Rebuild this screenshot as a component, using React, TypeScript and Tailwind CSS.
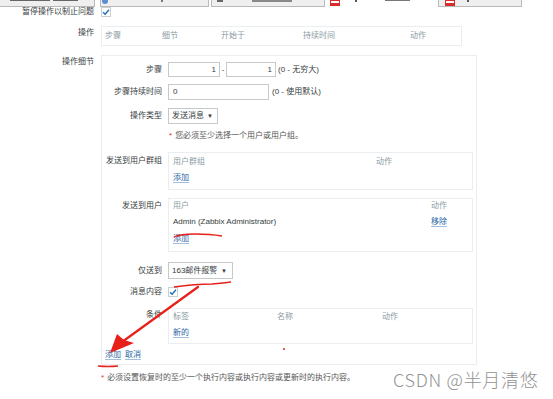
import React from 'react'

const Check = () => (
  <div className="w-[10px] h-[10px] border border-[#c9d0d4] bg-white flex items-center justify-center">
    <svg width="8" height="8" viewBox="0 0 8 8">
      <path d="M1 4.2 L3.1 6.2 L7 1.8" stroke="#1f6fb5" strokeWidth="1.4" fill="none" />
    </svg>
  </div>
)

const Link = ({ children }: { children: React.ReactNode }) => (
  <span className="text-[#1f65a6] border-b border-[#9fbfdc] leading-[9px]">{children}</span>
)

const Row = ({
  label,
  children,
  className = '',
  labelClass = 'items-center',
}: {
  label: string
  children: React.ReactNode
  className?: string
  labelClass?: string
}) => (
  <div className={`flex ${className}`}>
    <div className={`w-[60px] flex justify-end text-right ${labelClass}`}>{label}</div>
    <div className="ml-[6px] flex items-center">{children}</div>
  </div>
)

export default function App() {
  return (
    <div
      className="relative w-[553px] h-[399px] bg-white overflow-hidden text-[8px] leading-[10px] text-[#363c40]"
      style={{ fontFamily: '"Liberation Sans", "Noto Sans CJK SC", sans-serif' }}
    >
      {/* browser tabs, cut off at the top */}
      <div className="flex h-[7px]">
        <div className="w-[95px] bg-[#efefef] border-r border-b border-[#b9b9b9] flex gap-[3px] pl-[10px] pt-0">
          <div className="w-[40px] h-[1px] bg-[#666]" />
          <div className="w-[25px] h-[1px] bg-[#666]" />
        </div>
        <div className="ml-[5px] w-[109px] bg-[#efefef] border-x border-b border-[#b9b9b9] relative">
          <div className="absolute left-[1px] top-0 w-[6px] h-[4px] rounded-b-full bg-[#5b8fd6]" />
          <div className="absolute left-[60px] top-0 w-[2px] h-[2px] bg-[#777]" />
        </div>
        <div className="ml-[2px] w-[114px] bg-[#efefef] border-x border-b border-[#b9b9b9] relative">
          <div className="absolute left-[5px] top-0 w-[6px] h-[2px] bg-[#666]" />
          <div className="absolute left-[40px] top-0 w-[40px] h-[2px] bg-[#888]" />
        </div>
        <div className="w-[113px] relative">
          <div className="absolute left-[5px] top-0 w-[10px] h-[6px] bg-[#d92b2b] p-[1px]">
            <div className="w-full h-[2px] bg-white" />
          </div>
          <div className="absolute left-[30px] top-0 w-[2px] h-[2px] bg-[#555]" />
          <div className="absolute left-[60px] top-0 w-[25px] h-[1px] bg-[#777]" />
        </div>
        <div className="w-[84px] bg-[#efefef] border-x border-b border-[#b9b9b9] relative">
          <div className="absolute left-[6px] top-0 w-[10px] h-[6px] bg-[#d92b2b] p-[1px]">
            <div className="w-full h-[2px] bg-white" />
          </div>
          <div className="absolute left-[28px] top-0 w-[2px] h-[2px] bg-[#555]" />
        </div>
      </div>

      {/* pause row */}
      <div className="flex items-center h-[9px]">
        <div className="w-[94px] text-right">暂停操作以制止问题</div>
        <div className="ml-[7px]">
          <Check />
        </div>
      </div>

      {/* operations */}
      <div className="flex mt-[10px]">
        <div className="w-[94px] text-right pt-[2px]">操作</div>
        <div className="ml-[7px] w-[361px] h-[20px] border border-[#ebeef0] relative text-[#8a9aa3]">
          <span className="absolute left-[3px] top-[4px]">步骤</span>
          <span className="absolute left-[60px] top-[4px]">细节</span>
          <span className="absolute left-[119px] top-[4px]">开始于</span>
          <span className="absolute left-[201px] top-[4px]">持续时间</span>
          <span className="absolute left-[308px] top-[4px]">动作</span>
        </div>
      </div>

      {/* operation details */}
      <div className="flex mt-[9px]">
        <div className="w-[94px] text-right pt-[2px]">操作细节</div>
        <div className="ml-[7px] w-[376px] border border-[#ebeef0] pt-[6px] pb-[4px]">
          <Row label="步骤" className="h-[15px]">
            <div className="w-[52px] h-[15px] border border-[#c4c9cc] text-right pr-[3px] leading-[13px]">1</div>
            <span className="mx-[1px] w-[4px] text-center">-</span>
            <div className="w-[50px] h-[15px] border border-[#c4c9cc] text-right pr-[3px] leading-[13px]">1</div>
            <span className="ml-[2px]">(0 - 无穷大)</span>
          </Row>
          <Row label="步骤持续时间" className="h-[16px] mt-[7px]">
            <div className="w-[101px] h-[16px] border border-[#c4c9cc] pl-[4px] leading-[14px]">0</div>
            <span className="ml-[3px]">(0 - 使用默认)</span>
          </Row>
          <Row label="操作类型" className="h-[16px] mt-[8px]">
            <div className="w-[50px] h-[16px] border border-[#c4c9cc] pl-[3px] pr-[4px] flex items-center justify-between">
              <span>发送消息</span>
              <span className="text-[6px]">▼</span>
            </div>
          </Row>
          <div className="flex h-[10px] mt-[7px] ml-[67px] items-center">
            <span className="text-[#e33734]">*</span>
            <span className="ml-[3px] text-[#555]">您必须至少选择一个用户或用户组。</span>
          </div>
          <Row label="发送到用户群组" className="mt-[11px]" labelClass="items-start pt-[4px]">
            <div className="w-[305px] h-[38px] border border-[#ebeef0] relative">
              <span className="absolute left-[4px] top-[4px] text-[#8a9aa3]">用户群组</span>
              <span className="absolute left-[207px] top-[4px] text-[#8a9aa3]">动作</span>
              <span className="absolute left-[4px] top-[20px]">
                <Link>添加</Link>
              </span>
            </div>
          </Row>
          <Row label="发送到用户" className="mt-[8px]" labelClass="items-start pt-[3px]">
            <div className="w-[305px] h-[54px] border border-[#ebeef0] relative">
              <span className="absolute left-[4px] top-[2px] text-[#8a9aa3]">用户</span>
              <span className="absolute left-[262px] top-[2px] text-[#8a9aa3]">动作</span>
              <span className="absolute left-[4px] top-[18px]">Admin (Zabbix Administrator)</span>
              <span className="absolute left-[262px] top-[18px]">
                <Link>移除</Link>
              </span>
              <span className="absolute left-[4px] top-[35px]">
                <Link>添加</Link>
              </span>
            </div>
          </Row>
          <Row label="仅送到" className="h-[17px] mt-[10px]">
            <div className="w-[65px] h-[17px] border border-[#c4c9cc] pl-[3px] pr-[5px] flex items-center justify-between">
              <span>163邮件报警</span>
              <span className="text-[6px]">▼</span>
            </div>
          </Row>
          <Row label="消息内容" className="h-[10px] mt-[8px]">
            <Check />
          </Row>
          <Row label="条件" className="mt-[11px]" labelClass="items-start pt-[2px]">
            <div className="w-[305px] h-[36px] border border-[#ebeef0] relative">
              <span className="absolute left-[4px] top-[3px] text-[#8a9aa3]">标签</span>
              <span className="absolute left-[108px] top-[3px] text-[#8a9aa3]">名称</span>
              <span className="absolute left-[213px] top-[3px] text-[#8a9aa3]">动作</span>
              <span className="absolute left-[4px] top-[19px]">
                <Link>新的</Link>
              </span>
            </div>
          </Row>
          <div className="flex gap-[4px] mt-[6px] pl-[3px] h-[10px] items-center">
            <Link>添加</Link>
            <Link>取消</Link>
          </div>
        </div>
      </div>

      <div className="flex mt-[8px] ml-[101px] h-[10px] items-center">
        <span className="text-[#e33734]">*</span>
        <span className="ml-[3px] text-[#555]">必须设置恢复时的至少一个执行内容或执行内容或更新时的执行内容。</span>
      </div>

      {/* watermark */}
      <div
        className="absolute left-[393px] top-[368px] text-[18px] leading-[22px] tracking-[0.7px] text-[#939393] whitespace-nowrap"
        style={{ fontFamily: '"Noto Sans CJK SC", "Noto Sans", sans-serif', fontWeight: 300 }}
      >
        CSDN @半月清悠
      </div>

      {/* red hand-drawn annotations */}
      <svg className="absolute left-0 top-0 pointer-events-none" width="553" height="399" viewBox="0 0 553 399">
        <path d="M174 237 Q180 234 195 234 Q210 234 222 236" stroke="#e8201a" strokeWidth="1.3" fill="none" />
        <path d="M174 287 Q195 284 212 284 Q224 283 231 282" stroke="#e8201a" strokeWidth="1.3" fill="none" />
        <path d="M198 287 L122 342" stroke="#e8201a" strokeWidth="2.2" fill="none" strokeLinecap="round" />
        <path d="M110 353 L117 334 L124 340 L134 343 Z" fill="#e8201a" />
        <path d="M98 366 Q108 367 118 366" stroke="#e8201a" strokeWidth="1.3" fill="none" />
        <circle cx="284" cy="349" r="1" fill="#e8201a" />
      </svg>
    </div>
  )
}
